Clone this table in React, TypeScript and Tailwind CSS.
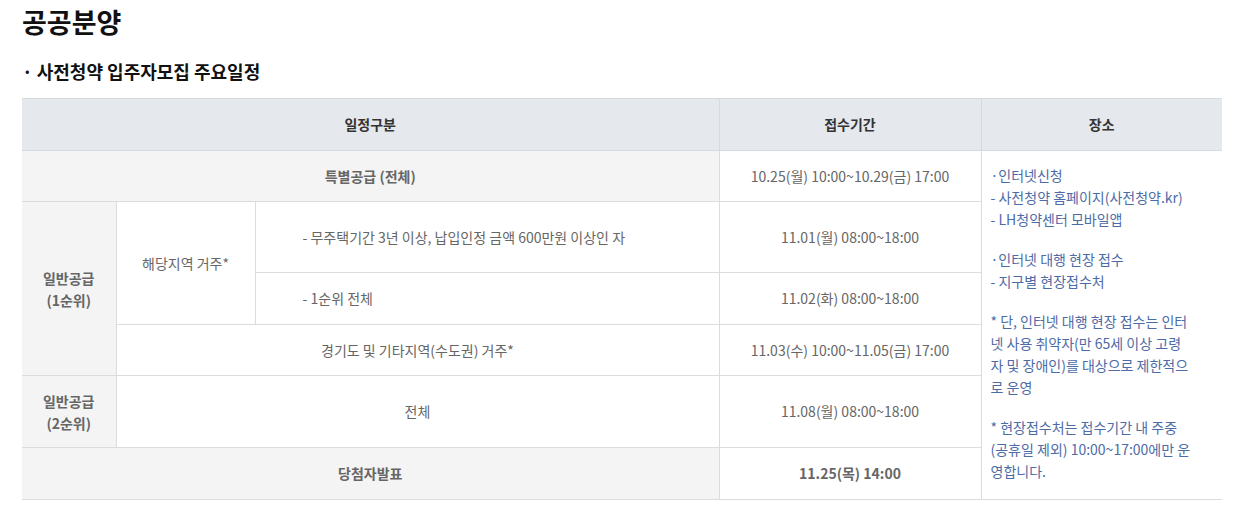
const FONT = "font-['Noto_Sans_CJK_KR','Noto_Sans',sans-serif]";

const cell = "border border-[#dcdcdc] text-center align-middle text-[14px] text-[#666]";
const grayLabel = `${cell} bg-[#f4f4f4] font-bold text-[#555]`;

const dateRows = [
  "10.25(월) 10:00~10.29(금) 17:00",
  "11.01(월) 08:00~18:00",
  "11.02(화) 08:00~18:00",
  "11.03(수) 10:00~11.05(금) 17:00",
  "11.08(월) 08:00~18:00",
];

function PlaceCell() {
  const blocks = [
    ["·인터넷신청", "- 사전청약 홈페이지(사전청약.kr)", "- LH청약센터 모바일앱"],
    ["·인터넷 대행 현장 접수", "- 지구별 현장접수처"],
    [
      "* 단, 인터넷 대행 현장 접수는 인터",
      "넷 사용 취약자(만 65세 이상 고령",
      "자 및 장애인)를 대상으로 제한적으",
      "로 운영",
    ],
    [
      "* 현장접수처는 접수기간 내 주중",
      "(공휴일 제외) 10:00~17:00에만 운",
      "영합니다.",
    ],
  ];
  return (
    <td
      rowSpan={6}
      className="border-y border-l border-[#dcdcdc] pl-[9px] pr-[12px] pb-[4px] text-left align-middle text-[14px] leading-[22px] text-[#4d6ba6]"
    >
      <div className="flex flex-col gap-[18px] whitespace-nowrap">
        {blocks.map((lines, i) => (
          <div key={i}>
            {lines.map((l) => (
              <div key={l}>{l}</div>
            ))}
          </div>
        ))}
      </div>
    </td>
  );
}

export default function App() {
  return (
    <div className={`${FONT} min-h-[506px] bg-white px-[22px] text-[#111]`}>
      <h1 className="pt-[2px] text-[27px] font-bold leading-[40px]">공공분양</h1>
      <h2 className="mt-[17px] text-[18px] font-bold leading-[24px]">· 사전청약 입주자모집 주요일정</h2>

      <table className="mt-[15px] w-[1200px] table-fixed border-collapse">
        <colgroup>
          <col className="w-[94px]" />
          <col className="w-[139px]" />
          <col className="w-[464px]" />
          <col className="w-[262px]" />
          <col className="w-[241px]" />
        </colgroup>
        <thead>
          <tr className="h-[52px] bg-[#e5e8ec] text-[14px] font-bold text-[#333]">
            <th colSpan={3} className="border-y border-r border-[#d6d9dd]">일정구분</th>
            <th className="border border-[#d6d9dd]">접수기간</th>
            <th className="border-y border-l border-[#d6d9dd]">장소</th>
          </tr>
        </thead>
        <tbody>
          <tr className="h-[51px]">
            <td colSpan={3} className={`${grayLabel} border-l-0`}>특별공급 (전체)</td>
            <td className={cell}>{dateRows[0]}</td>
            <PlaceCell />
          </tr>
          <tr className="h-[71px]">
            <td rowSpan={3} className={`${grayLabel} border-l-0 leading-[22px]`}>
              일반공급
              <br />
              (1순위)
            </td>
            <td rowSpan={2} className={cell}>해당지역 거주*</td>
            <td className={`${cell} pl-[47px] text-left`}>
              - 무주택기간 3년 이상, 납입인정 금액 600만원 이상인 자
            </td>
            <td className={cell}>{dateRows[1]}</td>
          </tr>
          <tr className="h-[52px]">
            <td className={`${cell} pl-[47px] text-left`}>- 1순위 전체</td>
            <td className={cell}>{dateRows[2]}</td>
          </tr>
          <tr className="h-[51px]">
            <td colSpan={2} className={cell}>경기도 및 기타지역(수도권) 거주*</td>
            <td className={cell}>{dateRows[3]}</td>
          </tr>
          <tr className="h-[72px]">
            <td className={`${grayLabel} border-l-0 leading-[22px]`}>
              일반공급
              <br />
              (2순위)
            </td>
            <td colSpan={2} className={cell}>전체</td>
            <td className={cell}>{dateRows[4]}</td>
          </tr>
          <tr className="h-[52px]">
            <td colSpan={3} className={`${grayLabel} border-l-0`}>당첨자발표</td>
            <td className={`${cell} font-bold text-[#111]`}>11.25(목) 14:00</td>
          </tr>
        </tbody>
      </table>
    </div>
  );
}
